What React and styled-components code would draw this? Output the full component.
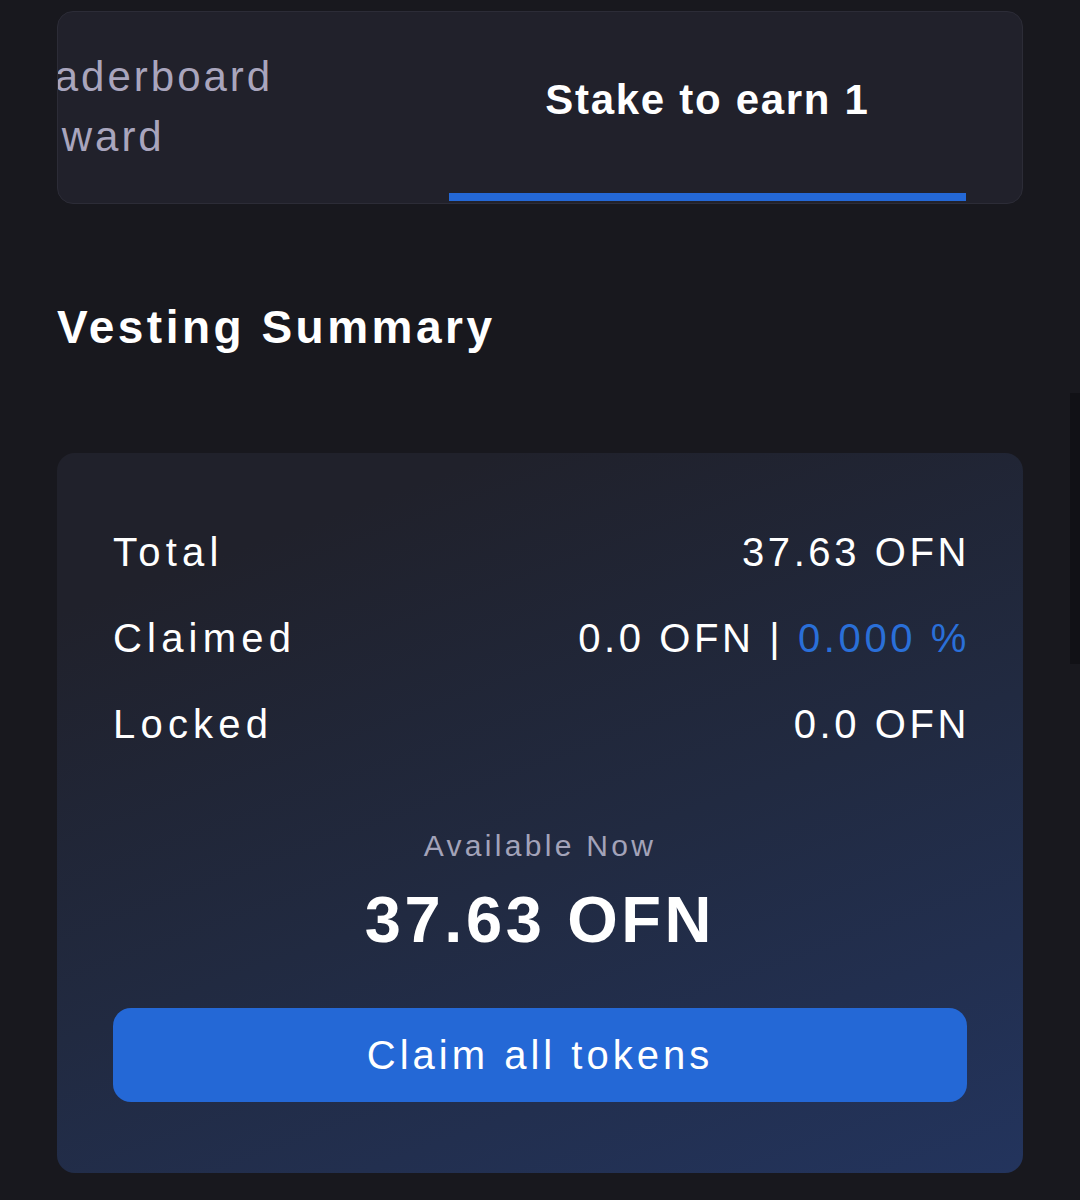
import React, { useEffect, useRef } from "react";
import styled, { createGlobalStyle } from "styled-components";

const GlobalStyle = createGlobalStyle`
  html, body {
    margin: 0;
    padding: 0;
    background: #18181e;
  }
  body {
    font-family: "Liberation Sans", Arial, sans-serif;
    color: #fff;
    overflow: hidden;
  }
`;

const tabs = [
  { id: "leaderboard", label: "Leaderboard Reward" },
  { id: "stake", label: "Stake to earn 1" },
];

const rows = [
  { label: "Total", value: "37.63 OFN" },
  { label: "Claimed", value: "0.0 OFN", extra: "0.000 %" },
  { label: "Locked", value: "0.0 OFN" },
];

const App = () => {
  const scroller = useRef(null);

  useEffect(() => {
    // active tab sits at the end of the strip, keep it in view
    if (scroller.current) {
      scroller.current.scrollLeft = scroller.current.scrollWidth;
    }
  }, []);

  return (
    <Page>
      <GlobalStyle />
      <TabCard>
        <TabScroller ref={scroller}>
          {tabs.map((t) => (
            <Tab key={t.id} active={t.id === "stake"}>
              <TabLabel active={t.id === "stake"}>{t.label}</TabLabel>
            </Tab>
          ))}
        </TabScroller>
      </TabCard>

      <Title>Vesting Summary</Title>

      <SummaryCard>
        <Rows>
          {rows.map((r) => (
            <Row key={r.label}>
              <Label>{r.label}</Label>
              <Value>
                {r.value}
                {r.extra && (
                  <>
                    {" | "}
                    <Accent>{r.extra}</Accent>
                  </>
                )}
              </Value>
            </Row>
          ))}
        </Rows>
        <Available>
          <AvailableLabel>Available Now</AvailableLabel>
          <AvailableAmount>37.63 OFN</AvailableAmount>
        </Available>
        <ClaimButton>Claim all tokens</ClaimButton>
      </SummaryCard>

      <ScrollThumb />
    </Page>
  );
};

export default App;

const Page = styled.main`
  width: 966px;
  padding: 11px 57px 0;
  display: flex;
  flex-direction: column;
`;

const TabCard = styled.section`
  height: 193px;
  box-sizing: border-box;
  background: #21212b;
  border: 1px solid #2c2c37;
  border-radius: 16px;
  overflow: hidden;
`;

const TabScroller = styled.div`
  display: flex;
  height: 100%;
  padding-right: 56px;
  overflow-x: auto;
  scrollbar-width: none;

  ::-webkit-scrollbar {
    display: none;
  }
`;

const Tab = styled.button`
  flex: 0 0 517px;
  box-sizing: border-box;
  height: 189px;
  padding: 0 70px;
  display: flex;
  align-items: center;
  justify-content: center;
  background: none;
  border: none;
  border-bottom: 8px solid ${(p) => (p.active ? "#2468d6" : "transparent")};
  font-family: inherit;
  cursor: pointer;
`;

const TabLabel = styled.span`
  text-align: left;
  font-size: 42px;
  font-weight: ${(p) => (p.active ? 700 : 400)};
  letter-spacing: ${(p) => (p.active ? "1.7px" : "3px")};
  line-height: 60px;
  color: ${(p) => (p.active ? "#ffffff" : "#a9a5bd")};
  margin-top: ${(p) => (p.active ? "-6px" : "8px")};
`;

const Title = styled.h2`
  margin: 95px 0 98px;
  font-size: 46px;
  line-height: 56px;
  font-weight: 700;
  letter-spacing: 3.5px;
  color: #fff;
`;

const SummaryCard = styled.section`
  display: flex;
  flex-direction: column;
  padding: 56px 56px 71px;
  border-radius: 18px;
  background: linear-gradient(160deg, #20212b 15%, #212a41 55%, #23345d 100%);
`;

const Rows = styled.div`
  display: flex;
  flex-direction: column;
`;

const Row = styled.div`
  height: 86px;
  display: flex;
  align-items: center;
  justify-content: space-between;
  font-size: 40px;
  color: #fff;
`;

const Label = styled.span`
  letter-spacing: 5.2px;
`;

const Value = styled.span`
  letter-spacing: 3.6px;
  white-space: pre;
  margin-right: -3px;
`;

const Accent = styled.span`
  color: #2a6fd8;
`;

const Available = styled.div`
  margin-top: 59px;
  display: flex;
  flex-direction: column;
  align-items: center;
  gap: 18px;
`;

const AvailableLabel = styled.div`
  font-size: 30px;
  line-height: 40px;
  letter-spacing: 3.3px;
  color: #a3a3b9;
`;

const AvailableAmount = styled.div`
  font-size: 65px;
  line-height: 72px;
  font-weight: 700;
  letter-spacing: 3.6px;
  color: #fff;
`;

const ClaimButton = styled.button`
  margin-top: 52px;
  height: 94px;
  border: none;
  border-radius: 18px;
  background: #2468d6;
  color: #fff;
  font-family: inherit;
  font-size: 40px;
  letter-spacing: 4px;
  cursor: pointer;
`;

const ScrollThumb = styled.div`
  position: fixed;
  right: 0;
  top: 393px;
  width: 10px;
  height: 271px;
  background: #111116;
`;
